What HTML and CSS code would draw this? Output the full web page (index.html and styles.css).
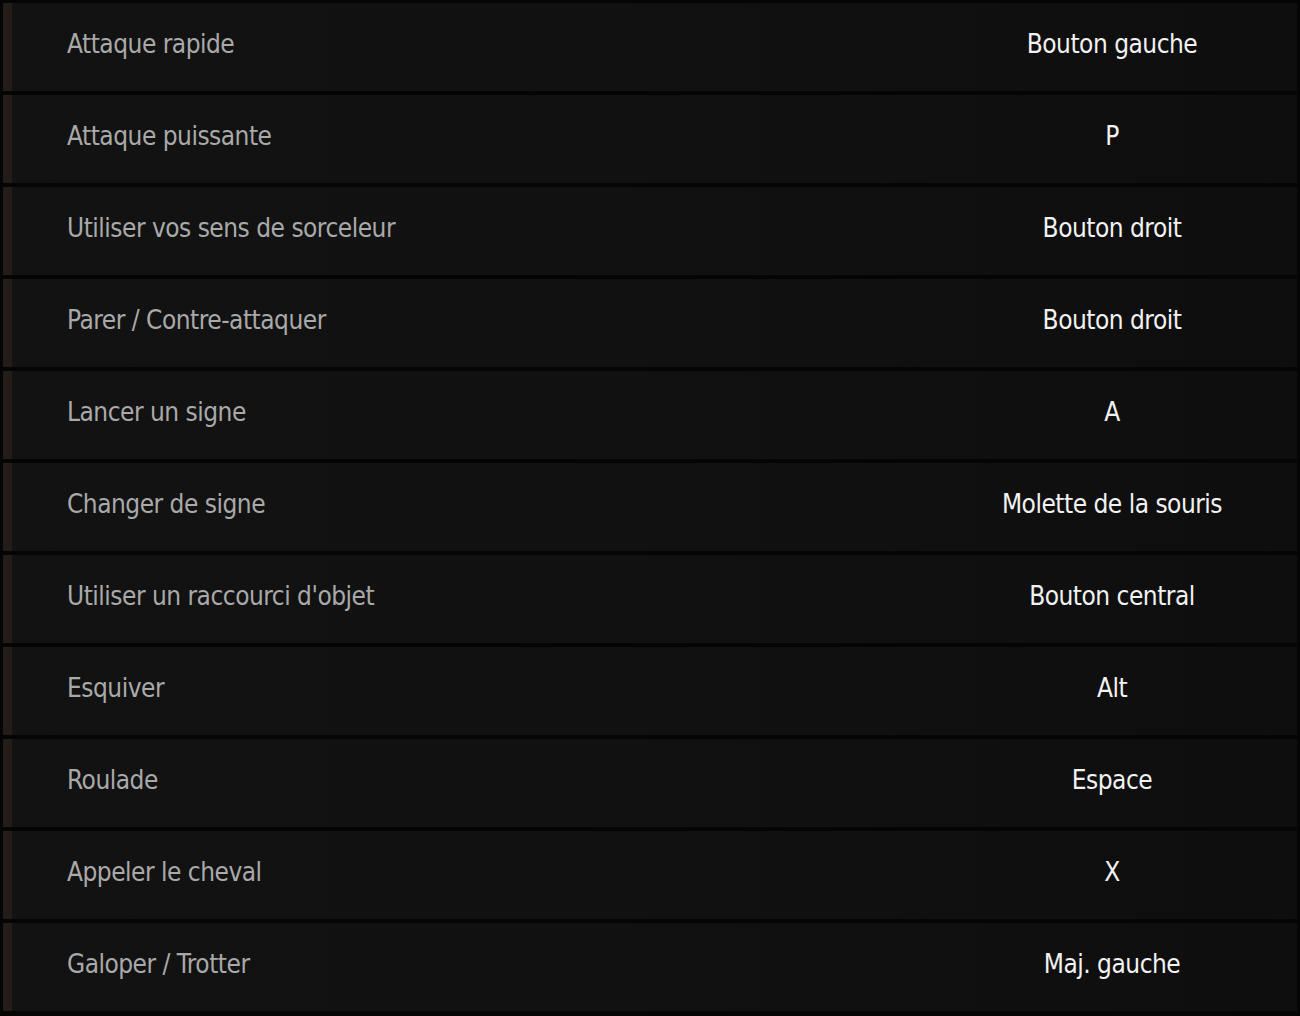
FILE: index.html
```html
<!DOCTYPE html>
<html lang="fr">
<head>
    <meta charset="UTF-8">
    <title>Commandes</title>
    <link rel="stylesheet" href="styles.css">
</head>
<body>
    <div class="bindings">
        <div class="row"><span class="action">Attaque rapide</span><span class="key">Bouton gauche</span></div>
        <div class="row"><span class="action">Attaque puissante</span><span class="key">P</span></div>
        <div class="row"><span class="action">Utiliser vos sens de sorceleur</span><span class="key">Bouton droit</span></div>
        <div class="row"><span class="action">Parer / Contre-attaquer</span><span class="key">Bouton droit</span></div>
        <div class="row"><span class="action">Lancer un signe</span><span class="key">A</span></div>
        <div class="row"><span class="action">Changer de signe</span><span class="key">Molette de la souris</span></div>
        <div class="row"><span class="action">Utiliser un raccourci d'objet</span><span class="key">Bouton central</span></div>
        <div class="row"><span class="action">Esquiver</span><span class="key">Alt</span></div>
        <div class="row"><span class="action">Roulade</span><span class="key">Espace</span></div>
        <div class="row"><span class="action">Appeler le cheval</span><span class="key">X</span></div>
        <div class="row"><span class="action">Galoper / Trotter</span><span class="key">Maj. gauche</span></div>
    </div>
</body>
</html>
```

FILE: styles.css
```css
body {
    margin: 0;
    background: #050505;
    font-family: 'DejaVu Sans Condensed', 'Liberation Sans', sans-serif;
    overflow: hidden;
}
.bindings {
    padding: 3px 3px 0 3px;
    display: flex;
    flex-direction: column;
    gap: 4px;
}
.row {
    height: 88px;
    box-sizing: border-box;
    display: grid;
    grid-template-columns: 1fr 300px;
    align-items: center;
    padding: 0 35px 7px 55px;
    border-left: 9px solid #231c19;
    background: linear-gradient(to right, #121212 0%, #111111 50%, #0e0e0e 100%);
    font-size: 26px;
    letter-spacing: -0.5px;
}
.action {
    color: #a9a9a9;
}
.key {
    color: #f2f2f2;
    text-align: center;
}
```
